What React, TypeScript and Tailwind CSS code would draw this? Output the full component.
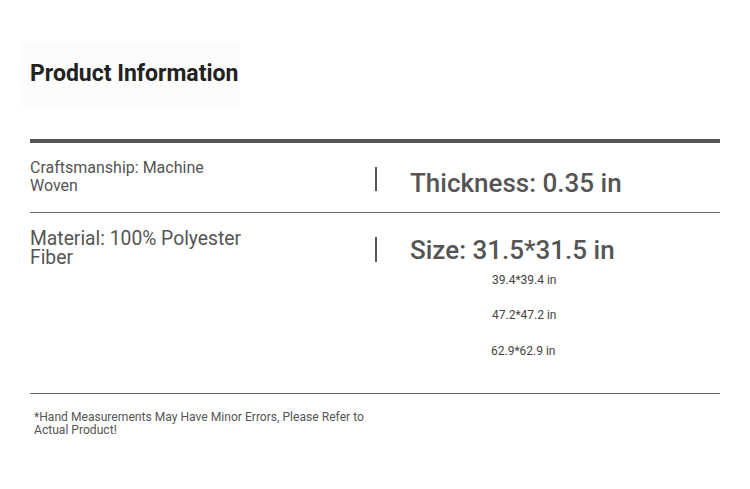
import React from "react";

export default function App() {
  return (
    <div className="w-[750px] h-[489px] bg-white font-['Roboto','Liberation_Sans',sans-serif] text-[#555] overflow-hidden">
      <div className="pt-[42px] pl-[20px]">
        <div className="w-[220px] h-[64px] bg-[#fcfcfc] flex items-center pl-[10px]">
          <h1 className="text-[23px] leading-[24px] font-bold text-[#222]">Product Information</h1>
        </div>
      </div>

      <div className="mx-[30px] mt-[33px] border-t-4 border-[#555]">
        {/* Row 1 */}
        <div className="flex h-[70px] border-b border-[#6a6a6a]">
          <div className="w-[345px] pt-[16px] text-[16px] leading-[17.5px]">
            Craftsmanship: Machine
            <br />
            Woven
          </div>
          <div className="mt-[24px] w-[2px] h-[24px] bg-[#555]" />
          <div className="ml-[33px] mt-[27px] text-[26px] leading-[26px] font-medium text-[#555]">Thickness: 0.35 in</div>
        </div>

        {/* Row 2 */}
        <div className="flex h-[181px] border-b border-[#6a6a6a]">
          <div className="w-[345px] pt-[16px] text-[19.3px] leading-[19px]">
            Material: 100% Polyester
            <br />
            Fiber
          </div>
          <div className="mt-[24px] w-[2px] h-[25px] bg-[#555]" />
          <div className="ml-[33px] flex flex-col">
            <div className="mt-[24px] text-[26px] leading-[26px] font-medium text-[#555]">Size: 31.5*31.5 in</div>
            <div className="pl-[82px] text-[12px] leading-[14px] text-[#444]">
              <div className="mt-[10px]">39.4*39.4 in</div>
              <div className="mt-[20.5px]">47.2*47.2 in</div>
              <div className="mt-[22.5px] -ml-[1px]">62.9*62.9 in</div>
            </div>
          </div>
        </div>

        {/* Footnote */}
        <div className="pl-[4px] pt-[17px] text-[12.1px] leading-[12.5px] text-[#555]">
          *Hand Measurements May Have Minor Errors, Please Refer to
          <br />
          Actual Product!
        </div>
      </div>
    </div>
  );
}
